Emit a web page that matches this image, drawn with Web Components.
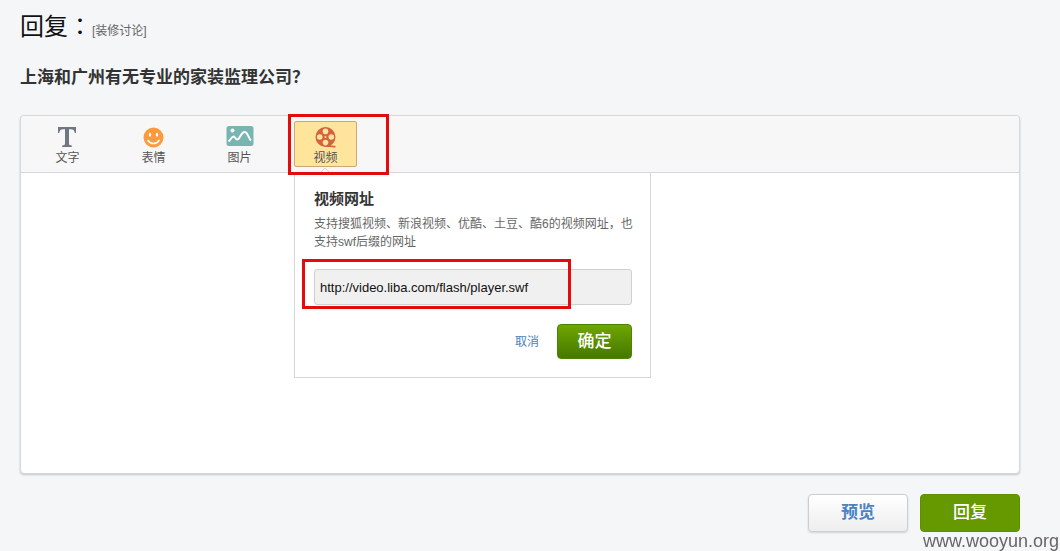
<!DOCTYPE html>
<html lang="zh-CN">
<head>
<meta charset="utf-8">
<title>回复</title>
<style>
html, body { margin: 0; }
body {
  background: #f5f6f8;
  color: #333;
  font: 12px/18px "Liberation Sans", "Noto Sans CJK SC", sans-serif;
}
</style>
</head>
<body>
<reply-page></reply-page>

<template id="t-page">
  <style>
    :host { display: block; padding: 7px 40px 16px 20px; }
    header { display: flex; align-items: baseline; }
    h1 { margin: 0; font-size: 24px; line-height: 36px; font-weight: 400; color: #111; }
    .colon { font-family: "Noto Sans CJK TC", sans-serif; }
    header a { color: #666; text-decoration: none; }
    h2 { margin: 20px 0 0; font-size: 17px; line-height: 26px; font-weight: 700; }
    reply-editor { margin-top: 24px; }
    footer { display: flex; justify-content: flex-end; gap: 12px; margin-top: 20px; }
    .watermark { position: fixed; right: 1px; bottom: 0; font-size: 18px; line-height: 20px; color: #666; }
  </style>
  <header>
    <h1>回复<span class="colon" lang="zh-TW">：</span></h1>
    <a href="#">[装修讨论]</a>
  </header>
  <h2>上海和广州有无专业的家装监理公司？</h2>
  <reply-editor></reply-editor>
  <footer>
    <action-button kind="plain">预览</action-button>
    <action-button kind="flat">回复</action-button>
  </footer>
  <div class="watermark">www.wooyun.org</div>
</template>

<template id="t-editor">
  <style>
    :host {
      display: block; border: 1px solid #d5d7da; border-radius: 4px;
      background: #fff; box-shadow: 0 1px 2px #c4c6c9;
    }
    nav {
      display: flex; gap: 23px; padding: 5px 15px; height: 46px;
      background: #f7f7f7; border-bottom: 1px solid #d5d7da; border-radius: 4px 4px 0 0;
    }
    .video { position: relative; }
    .canvas { min-height: 300px; }
    video-popover { position: absolute; left: 0; top: 51px; z-index: 1; }
    mark-box { left: -6px; top: -7px; width: 101px; height: 61px; z-index: 3; }
  </style>
  <nav>
    <tool-button>
      <svg slot="icon" width="28" height="22" viewBox="0 0 28 22"><path fill="#6f7782" d="M4 1h18v6h-1.200c-.5-2.800-1.500-3.800-4-3.800h-1.800v14c0 1.700.6 2 2.800 2.200V21H8.200v-1.600c2.200-.2 2.800-.5 2.800-2.200v-14H9.200c-2.500 0-3.500 1-4 3.800H4z"/></svg>
      文字
    </tool-button>
    <tool-button>
      <svg slot="icon" width="28" height="22" viewBox="0 0 28 22"><circle cx="13.500" cy="11.500" r="10" fill="#fd9a3c"/><ellipse cx="10" cy="8.800" rx="1.200" ry="2" fill="#fff"/><ellipse cx="17" cy="8.800" rx="1.200" ry="2" fill="#fff"/><path d="M8 14.500c2.600 4 8.400 4 11 0" fill="none" stroke="#fff" stroke-width="1.500" stroke-linecap="round"/></svg>
      表情
    </tool-button>
    <tool-button>
      <svg slot="icon" width="28" height="22" viewBox="0 0 28 22"><rect x=".5" width="27" height="20" rx="2.500" fill="#78b5b1"/><circle cx="6.500" cy="4.500" r="2" fill="#fff"/><path d="M2.500 15.500C4.500 14 6 10 7.800 10.500c1.500.5 1.700 3 3.400 3 2.800 0 3.800-7.500 7.300-7.500 3.500 0 4 6.500 6.500 8.500" fill="none" stroke="#fff" stroke-width="2"/></svg>
      图片
    </tool-button>
    <div class="video">
      <tool-button active>
        <svg slot="icon" width="28" height="22" viewBox="0 0 28 22"><path d="M13 20.100h6c2 0 2 .9 4.500.4" fill="none" stroke="#d5613f" stroke-width="1.600"/><circle cx="13.500" cy="11" r="10" fill="#d5613f"/><g fill="#ffe59c"><circle cx="13.500" cy="5.400" r="2.800"/><circle cx="7.700" cy="11" r="2.800"/><circle cx="19.300" cy="11" r="2.800"/><circle cx="13.500" cy="16.600" r="2.800"/><circle cx="13.500" cy="11" r="1"/></g></svg>
        视频
      </tool-button>
      <video-popover></video-popover>
      <mark-box></mark-box>
    </div>
  </nav>
  <div class="canvas"></div>
</template>

<template id="t-tool">
  <style>
    :host { display: block; }
    button {
      display: flex; flex-direction: column; align-items: center; box-sizing: border-box;
      width: 63px; height: 46px; margin: 0; padding: 4px 0 0;
      border: 1px solid transparent; border-radius: 2px; background: none;
      font: inherit; line-height: 20px; color: #555; cursor: pointer;
    }
    :host([active]) button { background: #ffe59c; border-color: #d0a577; }
    ::slotted(svg) { display: block; flex: none; }
  </style>
  <button type="button"><slot name="icon"></slot><span><slot></slot></span></button>
</template>

<template id="t-popover">
  <style>
    :host {
      display: block; box-sizing: border-box; width: 357px; padding: 16px 18px 18px 19px;
      background: #fff; border: 1px solid #d5d7da;
    }
    .arrow { position: absolute; left: 24px; top: -6px; }
    label { display: block; font-size: 15px; line-height: 20px; font-weight: 700; }
    p { margin: 6px 0 18px; color: #666; white-space: nowrap; }
    .field { position: relative; }
    input {
      display: block; box-sizing: border-box; width: 100%; height: 36px; margin: 0; padding: 0 5px;
      border: 1px solid #d0d0d0; border-radius: 3px; background: #f0f0f0;
      font: 13px "Liberation Sans", sans-serif; color: #111;
    }
    mark-box { left: -12px; top: -10px; width: 269px; height: 50px; }
    .actions { display: flex; justify-content: flex-end; align-items: center; gap: 18px; margin-top: 19px; }
    a { color: #4a82bd; text-decoration: none; }
  </style>
  <svg class="arrow" width="12" height="6" viewBox="0 0 12 6"><path d="M1 6l5-5 5 5" fill="#fff" stroke="#d5d7da"/></svg>
  <label for="url">视频网址</label>
  <p>支持搜狐视频、新浪视频、优酷、土豆、酷6的视频网址，也<br>支持swf后缀的网址</p>
  <div class="field">
    <input id="url" type="text" value="http://video.liba.com/flash/player.swf">
    <mark-box></mark-box>
  </div>
  <div class="actions">
    <a href="#">取消</a>
    <action-button kind="small">确定</action-button>
  </div>
</template>

<template id="t-action">
  <style>
    :host { display: block; }
    button {
      display: block; box-sizing: border-box; width: 100px; height: 38px; margin: 0; padding: 0;
      border: 1px solid #5b9100; border-radius: 4px; background: #690;
      font: inherit; font-size: 17px; font-weight: 500; line-height: 36px; color: #fff; cursor: pointer;
    }
    :host([kind="plain"]) button {
      border-color: #cdced0; background: linear-gradient(#fff, #eee); color: #4a82c4;
      font-weight: 700; box-shadow: 0 1px 2px #d0d2d4;
    }
    :host([kind="small"]) button {
      width: 75px; height: 35px; border-color: #4b8500; background: linear-gradient(#6fa600, #457800);
      line-height: 33px;
    }
  </style>
  <button type="button"><slot></slot></button>
</template>

<template id="t-mark">
  <style>
    :host { display: block; position: absolute; box-sizing: border-box; border: 3px solid #e30b0b; pointer-events: none; }
  </style>
</template>

<script>
const define = (name, templateId) => customElements.define(name, class extends HTMLElement {
  constructor() {
    super();
    const template = document.getElementById(templateId);
    this.attachShadow({ mode: "open" }).append(document.importNode(template.content, true));
  }
});
define("mark-box", "t-mark");
define("action-button", "t-action");
define("tool-button", "t-tool");
define("video-popover", "t-popover");
define("reply-editor", "t-editor");
define("reply-page", "t-page");
</script>
</body>
</html>
